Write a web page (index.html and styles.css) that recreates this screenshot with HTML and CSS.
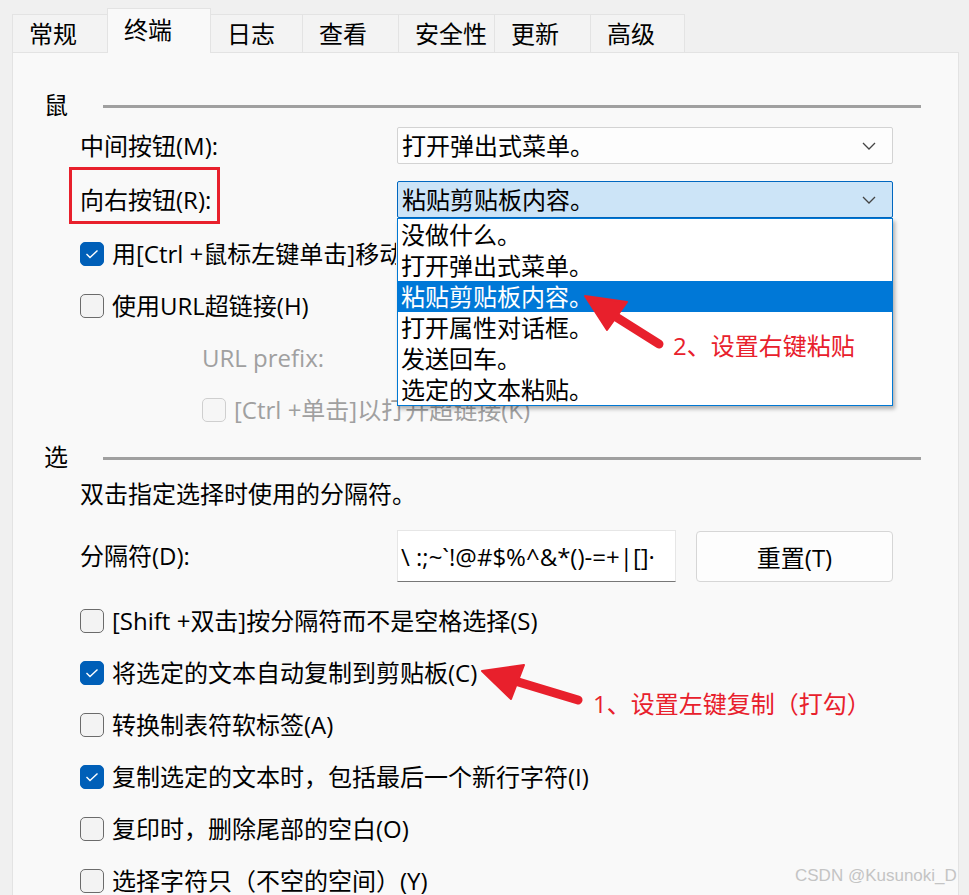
FILE: index.html
```html
<!DOCTYPE html>
<html lang="zh-CN">
<head>
<meta charset="utf-8">
<title>终端</title>
<link rel="stylesheet" href="styles.css">
</head>
<body>
<div class="tabs">
  <div class="tab w95">常规</div>
  <div class="tab active w103">终端</div>
  <div class="tab w92">日志</div>
  <div class="tab w96">查看</div>
  <div class="tab w96">安全性</div>
  <div class="tab w96">更新</div>
  <div class="tab w94">高级</div>
</div>
<div class="panel">
  <div class="group-head first"><span class="gname">鼠</span><span class="rule"></span></div>

  <div class="field-row r1">
    <div class="flabel">中间按钮(M):</div>
    <div class="select"><span>打开弹出式菜单。</span><svg class="chev" width="14" height="8" viewBox="0 0 14 8"><path d="M1 1 L7 7 L13 1" fill="none" stroke="#444" stroke-width="1.3"/></svg></div>
  </div>

  <div class="field-row r2">
    <div class="flabel"><span class="marked">向右按钮(R):</span></div>
    <div class="select-wrap">
      <div class="select open"><span>粘贴剪贴板内容。</span><svg class="chev" width="14" height="8" viewBox="0 0 14 8"><path d="M1 1 L7 7 L13 1" fill="none" stroke="#444" stroke-width="1.3"/></svg></div>
      <ul class="listbox">
        <li>没做什么。</li>
        <li>打开弹出式菜单。</li>
        <li class="hl">粘贴剪贴板内容。</li>
        <li>打开属性对话框。</li>
        <li>发送回车。</li>
        <li>选定的文本粘贴。</li>
      </ul>
    </div>
  </div>

  <div class="check-row mt-a"><span class="box on"><svg width="14" height="10" viewBox="0 0 14 10"><path d="M1.5 5 L5 8.5 L12.5 1.5" fill="none" stroke="#fff" stroke-width="1.4"/></svg></span><span class="clip">用[Ctrl +鼠标左键单击]移动光标位置(M)</span></div>
  <div class="check-row"><span class="box"></span><span>使用URL超链接(H)</span></div>
  <div class="check-row indent dim"><span>URL prefix:</span></div>
  <div class="check-row indent dim"><span class="box off"></span><span>[Ctrl +单击]以打开超链接(K)</span></div>

  <div class="group-head second"><span class="gname">选</span><span class="rule"></span></div>
  <div class="text-row">双击指定选择时使用的分隔符。</div>
  <div class="field-row r3">
    <div class="flabel">分隔符(D):</div>
    <div class="input"><span>\ :;~`!@#$%^&amp;*()-=+|[]·</span></div>
    <div class="btn">重置(T)</div>
  </div>

  <div class="check-row mt-b"><span class="box"></span><span>[Shift +双击]按分隔符而不是空格选择(S)</span></div>
  <div class="check-row"><span class="box on"><svg width="14" height="10" viewBox="0 0 14 10"><path d="M1.5 5 L5 8.5 L12.5 1.5" fill="none" stroke="#fff" stroke-width="1.4"/></svg></span><span>将选定的文本自动复制到剪贴板(C)</span></div>
  <div class="check-row"><span class="box"></span><span>转换制表符软标签(A)</span></div>
  <div class="check-row"><span class="box on"><svg width="14" height="10" viewBox="0 0 14 10"><path d="M1.5 5 L5 8.5 L12.5 1.5" fill="none" stroke="#fff" stroke-width="1.4"/></svg></span><span>复制选定的文本时，包括最后一个新行字符(I)</span></div>
  <div class="check-row"><span class="box"></span><span>复印时，删除尾部的空白(O)</span></div>
  <div class="check-row"><span class="box"></span><span>选择字符只（不空的空间）(Y)</span></div>
</div>

<svg class="annot" width="969" height="895" viewBox="0 0 969 895">
  <g fill="#e8202c" stroke="#e8202c" stroke-linejoin="round">
    <line x1="578" y1="700" x2="505" y2="678" stroke-width="9" stroke-linecap="round"/>
    <polygon points="482,671 524,665 511,699" stroke-width="2"/>
    <line x1="659" y1="344" x2="605" y2="310" stroke-width="9" stroke-linecap="round"/>
    <polygon points="585,296 627,302 607,330" stroke-width="2"/>
  </g>
</svg>
<div class="note n2">2、设置右键粘贴</div>
<div class="note n1">1、设置左键复制（打勾）</div>
<div class="watermark">CSDN @Kusunoki_D</div>
</body>
</html>
```

FILE: styles.css
```css
html, body {
  margin: 0;
  padding: 0;
}
body {
  width: 969px;
  height: 895px;
  overflow: hidden;
  position: relative;
  background: #f0f0f0;
  font-family: "Open Sans", "Noto Sans CJK SC", sans-serif;
  font-size: 24px;
  color: #000;
}

.tabs {
  display: flex;
  align-items: flex-end;
  height: 52px;
  padding-left: 12px;
  box-sizing: border-box;
}
.tab {
  height: 38px;
  box-sizing: border-box;
  padding-left: 16px;
  line-height: 38px;
  background: #f3f3f3;
  border: 1px solid #e3e3e3;
  border-bottom: none;
  margin-right: -1px;
  font-size: 24px;
  color: #000;
}
.tab.active {
  height: 45px;
  line-height: 42px;
  background: #f9f9f9;
  margin-bottom: -1px;
  position: relative;
  z-index: 1;
}
.w95 { width: 96px; }
.w103 { width: 104px; }
.w92 { width: 93px; }
.w96 { width: 97px; }
.w94 { width: 95px; }

.panel {
  margin-left: 12px;
  width: 947px;
  height: 860px;
  box-sizing: border-box;
  background: #f9f9f9;
  border: 1px solid #e3e3e3;
  position: relative;
}

.group-head {
  display: flex;
  align-items: center;
  height: 30px;
  padding-left: 31px;
  padding-right: 37px;
}
.group-head.first { margin-top: 37px; }
.group-head.second { margin-top: 6px; }
.gname {
  width: 59px;
  line-height: 30px;
}
.rule {
  flex: 1;
  height: 3px;
  background: #a0a0a0;
  margin-top: 2px;
}

.field-row {
  display: flex;
  align-items: center;
  padding-left: 67px;
}
.field-row.r1 { margin-top: 7px; height: 37px; }
.field-row.r2 { margin-top: 17px; height: 37px; }
.field-row.r3 { margin-top: 21px; height: 52px; }
.flabel {
  width: 317px;
  line-height: 30px;
  white-space: nowrap;
}
.marked {
  position: relative;
  display: inline-block;
}
.marked::after {
  content: "";
  position: absolute;
  left: -11px;
  right: -9px;
  top: -18px;
  bottom: -9px;
  border: 3px solid #e8202c;
}

.select {
  width: 496px;
  height: 37px;
  box-sizing: border-box;
  background: #fdfdfd;
  border: 1px solid #d3d3d3;
  border-radius: 2px;
  display: flex;
  align-items: center;
  justify-content: space-between;
  padding: 0 16px 0 4px;
  line-height: 30px;
}
.select.open {
  background: #cce4f7;
  border-color: #0067c0;
}
.chev { display: block; }
.select-wrap {
  position: relative;
  width: 496px;
  height: 37px;
}
.listbox {
  position: absolute;
  left: 0;
  top: 37px;
  width: 496px;
  box-sizing: border-box;
  margin: 0;
  padding: 0;
  list-style: none;
  background: #fff;
  border: 1px solid #0078d4;
  box-shadow: 2px 3px 4px rgba(0, 0, 0, 0.3);
  z-index: 5;
}
.listbox li {
  height: 31px;
  line-height: 31px;
  padding-left: 3px;
}
.listbox li.hl {
  background: #0078d7;
  color: #fff;
}

.check-row {
  display: flex;
  align-items: center;
  gap: 8px;
  height: 52px;
  padding-left: 67px;
  line-height: 30px;
  white-space: nowrap;
}
.check-row.mt-a { margin-top: 10px; }
.check-row.mt-b { margin-top: 13px; }
.check-row.indent { padding-left: 189px; }
.check-row.dim { color: #a0a0a0; }
.clip {
  max-width: 284px;
  overflow: hidden;
}
.box {
  width: 24px;
  height: 24px;
  box-sizing: border-box;
  border: 1.5px solid #6b6b6b;
  border-radius: 5px;
  background: #f3f3f3;
  display: flex;
  align-items: center;
  justify-content: center;
  flex: none;
}
.box.on {
  background: #005fb8;
  border-color: #005fb8;
}
.box.off {
  border-color: #cfcfcf;
  background: #f6f6f6;
}

.text-row {
  padding-left: 67px;
  margin-top: 7px;
  height: 30px;
  line-height: 30px;
}

.input {
  width: 279px;
  height: 52px;
  box-sizing: border-box;
  background: #fff;
  border: 1px solid #e6e6e6;
  border-bottom: 1.5px solid #777;
  overflow: hidden;
  white-space: nowrap;
  display: flex;
  align-items: center;
  padding-left: 3px;
}
.btn {
  margin-left: 20px;
  width: 197px;
  height: 51px;
  box-sizing: border-box;
  background: #fdfdfd;
  border: 1px solid #d6d6d6;
  border-radius: 4px;
  display: flex;
  align-items: center;
  justify-content: center;
}

.annot {
  position: absolute;
  left: 0;
  top: 0;
  z-index: 10;
  pointer-events: none;
}
.note {
  position: absolute;
  z-index: 10;
  color: #e8202c;
  font-size: 24px;
  line-height: 30px;
  white-space: nowrap;
}
.n2 { left: 673px; top: 331px; }
.n1 { left: 593px; top: 689px; }
.watermark {
  position: absolute;
  z-index: 10;
  left: 795px;
  top: 866px;
  font-family: "Liberation Sans", sans-serif;
  font-size: 17px;
  color: #c4c4c4;
}
```
